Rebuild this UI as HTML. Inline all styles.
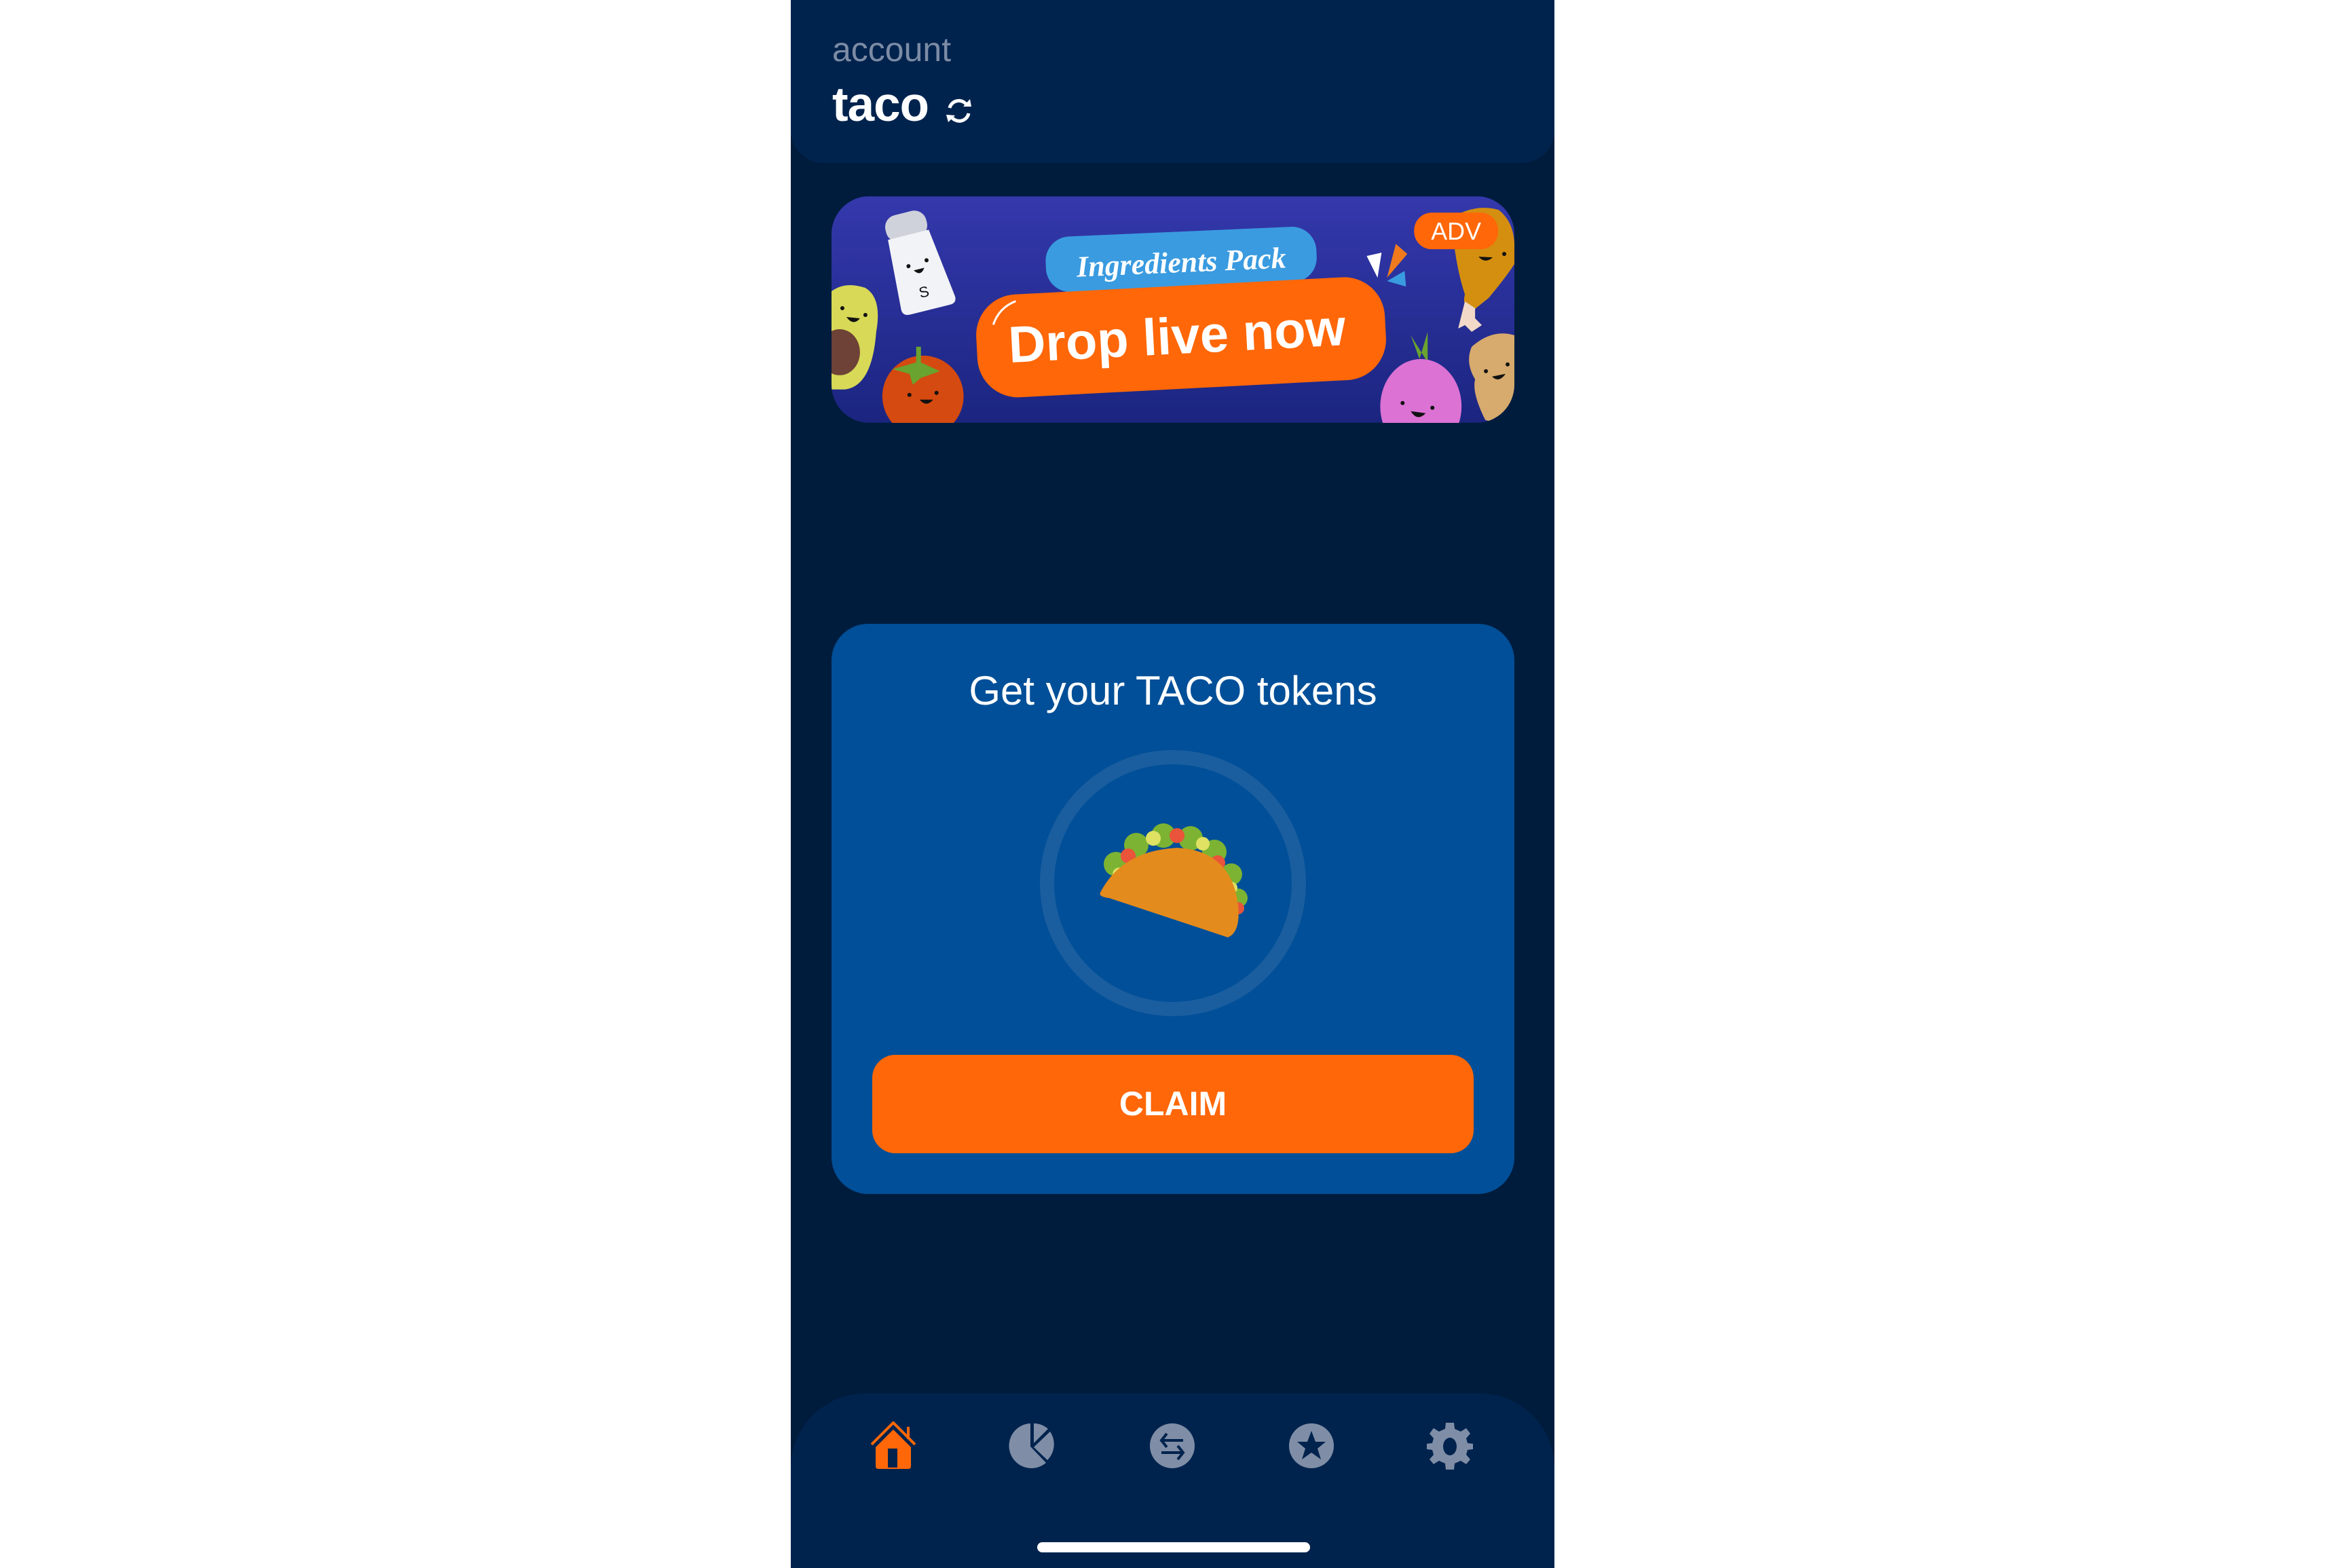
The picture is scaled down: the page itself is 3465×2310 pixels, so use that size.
<!DOCTYPE html>
<html><head><meta charset="utf-8"><style>
*{margin:0;padding:0;box-sizing:border-box}
html,body{width:3465px;height:2310px;background:#fff;overflow:hidden;font-family:"Liberation Sans",sans-serif}
.phone{position:absolute;left:1165px;top:0;width:1125px;height:2310px;background:#001c3d;overflow:hidden}
.hdr{position:absolute;left:0;top:0;width:1125px;height:240px;background:#00234e;border-radius:0 0 48px 48px}
.acc{position:absolute;left:61px;top:44px;font-size:50px;color:#7d8ca5}
.taco{position:absolute;left:61px;top:114px;font-size:71px;font-weight:bold;color:#fff;letter-spacing:-1px}
.banner{position:absolute;left:60px;top:289px;width:1006px;height:334px;border-radius:56px;overflow:hidden}
.card{position:absolute;left:60px;top:919px;width:1006px;height:840px;background:#004f98;border-radius:54px}
.title{position:absolute;left:0;width:100%;top:64px;text-align:center;color:#fff;font-size:60px}
.ring{position:absolute;left:307px;top:186px;width:392px;height:392px;border-radius:50%;border:21px solid #1a5e9f}
.btn{position:absolute;left:60px;top:635px;width:886px;height:145px;background:#ff6708;border-radius:34px;color:#fff;font-weight:bold;font-size:50px;text-align:center;line-height:145px}
.nav{position:absolute;left:0;top:2053px;width:1125px;height:300px;background:#00234e;border-radius:110px 110px 0 0}
.ic{position:absolute;top:2094px;width:72px;height:72px}
.bar{position:absolute;left:363px;top:2272px;width:402px;height:15px;background:#fff;border-radius:8px}
</style></head><body>
<div class="phone">
 <div class="hdr">
  <div class="acc">account</div>
  <div class="taco">taco</div>
  <svg style="position:absolute;left:226px;top:145px" width="44" height="36" viewBox="0 0 44 36"><path d="M8 14 A14 14 0 0 1 34 11" fill="none" stroke="#fff" stroke-width="5"/><path d="M36 22 A14 14 0 0 1 10 26" fill="none" stroke="#fff" stroke-width="5"/><path d="M28 12 L40 12 L38 1 Z" fill="#fff"/><path d="M16 25 L3 24 L6 35 Z" fill="#fff"/></svg>
 </div>
 <div class="banner">
  <svg width="1006" height="334" viewBox="0 0 1008 334">
   <defs><linearGradient id="g" x1="0" y1="0" x2="0" y2="1"><stop offset="0" stop-color="#3438ac"/><stop offset="1" stop-color="#1b2580"/></linearGradient></defs>
   <rect width="1008" height="334" fill="url(#g)"/>
   <g transform="rotate(-14 125 95)"><rect x="92" y="22" width="62" height="40" rx="18" fill="#cfd2da"/><path d="M92 55 L154 55 L168 160 Q168 170 158 170 L98 170 Q86 170 86 160 Z" fill="#f2f3f6"/><text x="125" y="150" font-size="22" text-anchor="middle" fill="#111">S</text><circle cx="112" cy="100" r="3" fill="#111"/><circle cx="140" cy="98" r="3" fill="#111"/><path d="M118 108 Q126 120 134 108 Z" fill="#111"/></g>
   <path d="M0 140 Q20 125 50 135 Q75 150 66 200 Q60 280 20 285 L0 285 Z" fill="#d7d957"/>
   <ellipse cx="12" cy="230" rx="30" ry="34" fill="#6e4236"/>
   <circle cx="16" cy="165" r="3" fill="#111"/><circle cx="50" cy="175" r="3" fill="#111"/><path d="M22 178 Q32 192 42 180 Z" fill="#111"/>
   <circle cx="135" cy="295" r="60" fill="#d44a10"/>
   <path d="M90 255 L125 245 L125 222 L132 222 L132 245 L160 258 L132 268 L120 278 L115 262 Z" fill="#6aa32f"/>
   <path d="M130 300 Q140 312 150 300 Z" fill="#111"/><circle cx="115" cy="293" r="3" fill="#111"/><circle cx="155" cy="290" r="3" fill="#111"/>
   <g transform="rotate(-2.5 515 90)"><rect x="316" y="52" width="400" height="82" rx="36" fill="#3a9be0"/>
   <text x="516" y="112" font-size="44" font-weight="bold" font-style="italic" fill="#fff" text-anchor="middle" font-family="Liberation Serif,serif">Ingredients Pack</text></g>
   <g transform="rotate(-3 515 207)"><rect x="214" y="132" width="604" height="152" rx="60" fill="#ff6708"/>
   <path d="M240 175 Q250 150 275 142" stroke="#fff" stroke-width="3" fill="none"/>
   <text x="510" y="232" font-size="76" font-weight="bold" fill="#fff" text-anchor="middle">Drop live now</text></g>
   <path d="M790 88 L812 83 L806 120 Z" fill="#fff"/>
   <path d="M820 120 L833 70 L850 85 Z" fill="#f07a1d"/>
   <path d="M820 125 L846 110 L848 133 Z" fill="#3a9be0"/>
   <path d="M915 32 Q950 10 985 20 Q1010 40 1008 80 L1008 100 Q995 120 970 150 L945 170 Q930 160 935 145 Q920 100 915 32 Z" fill="#d48f10"/>
   <path d="M935 155 L950 165 L950 180 L960 190 L945 200 L935 190 L925 195 Z" fill="#f3dac8"/>
   <circle cx="993" cy="85" r="3" fill="#111"/><path d="M955 89 Q965 100 976 90 Z" fill="#111"/>
   <rect x="860" y="24" width="124" height="54" rx="26" fill="#ff6708"/>
   <text x="922" y="64" font-size="36" fill="#fff" text-anchor="middle">ADV</text>
   <path d="M855 205 L868 240 L880 200 L880 245 Z" fill="#6aa32f"/>
   <ellipse cx="870" cy="310" rx="60" ry="70" fill="#db72d4"/>
   <circle cx="843" cy="305" r="3" fill="#111"/><circle cx="887" cy="312" r="3" fill="#111"/><path d="M855 317 Q865 333 877 320 Z" fill="#111"/>
   <path d="M945 222 Q975 195 1008 205 L1008 300 Q990 340 965 330 Q945 290 950 270 Q935 245 945 222 Z" fill="#d7aa6d"/>
   <circle cx="966" cy="258" r="3" fill="#111"/><circle cx="998" cy="248" r="3" fill="#111"/><path d="M975 266 Q985 276 995 262 Z" fill="#111"/>
  </svg>
 </div>
 <div class="card">
  <div class="title">Get your TACO tokens</div>
  <div class="ring"></div>
  <svg style="position:absolute;left:389px;top:294px" width="230" height="176" viewBox="0 0 230 176">
   <g fill="#7cb332"><circle cx="30" cy="60" r="18"/><circle cx="60" cy="32" r="18"/><circle cx="100" cy="18" r="18"/><circle cx="140" cy="22" r="18"/><circle cx="175" cy="42" r="18"/><circle cx="200" cy="75" r="16"/><circle cx="210" cy="110" r="14"/></g>
   <g fill="#e9543a"><circle cx="48" cy="48" r="11"/><circle cx="120" cy="18" r="11"/><circle cx="180" cy="58" r="11"/><circle cx="210" cy="125" r="9"/></g>
   <g fill="#dfe163"><circle cx="35" cy="75" r="10"/><circle cx="85" cy="22" r="11"/><circle cx="158" cy="30" r="10"/><circle cx="200" cy="95" r="9"/></g>
   <path d="M8 100 Q40 40 120 36 Q200 40 210 120 Q214 160 195 168 L20 110 Q2 108 8 100 Z" fill="#e38b1c"/>
  </svg>
  <div class="btn">CLAIM</div>
 </div>
 <div class="nav"></div>
 <svg class="ic" style="left:115px" viewBox="0 0 72 72"><path d="M4 34 L36 2 L68 34" fill="none" stroke="#ff6708" stroke-width="4"/><path d="M58 8 L58 26" stroke="#ff6708" stroke-width="4"/><path d="M10 38 L36 12 L62 38 L62 66 Q62 70 58 70 L14 70 Q10 70 10 66 Z" fill="#ff6708"/><rect x="28" y="40" width="14" height="28" fill="#00234e"/></svg>
 <svg class="ic" style="left:320px" viewBox="0 0 72 72"><path d="M33 3 A33 33 0 1 0 56 61 L33 37 Z" fill="#7f8ea6"/><path d="M38 3 L38 32 L59 11 A33 33 0 0 0 38 3 Z" fill="#7f8ea6"/><path d="M38 38 L62 15 A33 33 0 0 1 58 57 Z" fill="#7f8ea6"/></svg>
 <svg class="ic" style="left:526px" viewBox="0 0 72 72"><circle cx="36" cy="36" r="33" fill="#7f8ea6"/><path d="M52 28 L20 28 M28 18 L20 28 L28 38 M20 46 L52 46 M44 36 L52 46 L44 56" stroke="#00234e" stroke-width="4" fill="none"/></svg>
 <svg class="ic" style="left:731px" viewBox="0 0 72 72"><circle cx="36" cy="36" r="33" fill="#7f8ea6"/><path d="M36 14 L42 30 L57 30 L45 40 L50 56 L36 46 L22 56 L27 40 L15 30 L30 30 Z" fill="#00234e"/></svg>
 <svg class="ic" style="left:935px" viewBox="0 0 72 72"><path d="M30 2 L42 2 L43 11 L52 15 L60 10 L66 18 L60 25 L62 32 L70 33 L70 41 L62 42 L60 49 L66 56 L60 63 L52 58 L43 62 L42 71 L30 71 L29 62 L20 58 L12 63 L6 56 L12 49 L10 42 L2 41 L2 33 L10 32 L12 25 L6 18 L12 10 L20 15 L29 11 Z" fill="#7f8ea6"/><ellipse cx="36" cy="37" rx="10" ry="13" fill="#00234e"/></svg>
 <div class="bar"></div>
</div>
</body></html>
